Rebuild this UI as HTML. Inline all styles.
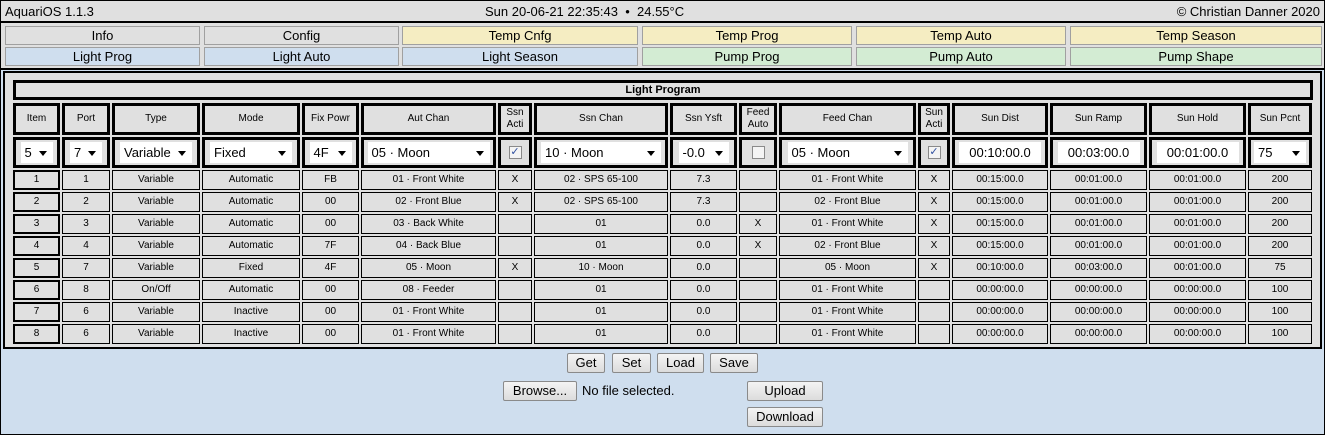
<!DOCTYPE html>
<html><head><meta charset="utf-8"><style>
*{box-sizing:border-box;margin:0;padding:0}
html,body{width:1325px;height:435px;overflow:hidden}
body{background:#cfdeee;font-family:"Liberation Sans",sans-serif;color:#000;position:relative}
.frame{position:absolute;left:0;top:0;width:1325px;height:435px;border:1px solid #000}
.hdr{position:absolute;left:0;top:0;width:1325px;height:23px;background:#e0e0e0;border:1px solid #000;border-bottom:2px solid #000;font-size:13px;line-height:21px}
.tabs{position:absolute;left:0;top:23px;width:1325px;height:47px;background:#e0e0e0;border-left:1px solid #000;border-right:1px solid #000;border-bottom:2px solid #000}
.tab{position:absolute;height:19px;border:1px solid #a0a0a0;font-size:13px;text-align:center;line-height:17px}
.g{background:#e0e0e0}.y{background:#f5edc2}.b{background:#cfdeee}.gr{background:#d3ecd3}
.panel{position:absolute;left:3px;top:71px;width:1319px;height:278px;border:2px solid #000;background:#e0e0e0;outline:1px solid #cfdeee}
.title{position:absolute;left:13px;top:80px;width:1300px;height:20px;border:3px solid #000;background:#e0e0e0;font-size:11px;font-weight:bold;text-align:center;line-height:14px}
table{position:absolute;left:11px;top:101px;border-collapse:separate;border-spacing:2px 2px;table-layout:fixed;width:1303px}
td{background:#e0e0e0;font-size:10px;text-align:center;padding:0;overflow:hidden;white-space:nowrap}
tr.h td{height:32px;border:3px solid #000;font-size:10px;line-height:12px;white-space:normal}
tr.i td{height:31px;border:3px solid #000}
tr.d td{height:20px;border:1px solid #000;line-height:18px}
tr.d td:first-child{border:2px solid #000;line-height:16px}
.sel{display:inline-block;background:#fff;height:21px;font-size:13px;line-height:21px;text-align:left;padding-left:4px;position:relative;vertical-align:middle}
.sel:after{content:"";position:absolute;right:6px;top:9px;border-left:4px solid transparent;border-right:4px solid transparent;border-top:5px solid #000}
.inp{display:inline-block;background:#fff;height:21px;font-size:13px;line-height:21px;vertical-align:middle}
.cb{display:inline-block;width:13px;height:13px;border:1px solid #8a8a8a;background:#f4f4f4;vertical-align:middle;font-size:11px;line-height:11px;color:#3050a0}
.btn{position:absolute;height:20px;border:1px solid #8a8a8a;border-radius:2px;background:linear-gradient(#f4f4f4,#dcdcdc);font-size:13px;text-align:center;line-height:18px}
</style></head><body>
<div class="hdr"><span style="position:absolute;left:4px">AquariOS 1.1.3</span><span style="position:absolute;left:484px">Sun 20-06-21 22:35:43 &nbsp;•&nbsp; 24.55°C</span><span style="position:absolute;right:4px">© Christian Danner 2020</span></div>
<div class="tabs">
<div class="tab g" style="left:4px;top:3px;width:195px">Info</div>
<div class="tab g" style="left:203px;top:3px;width:195px">Config</div>
<div class="tab y" style="left:401px;top:3px;width:236px">Temp Cnfg</div>
<div class="tab y" style="left:641px;top:3px;width:210px">Temp Prog</div>
<div class="tab y" style="left:855px;top:3px;width:210px">Temp Auto</div>
<div class="tab y" style="left:1069px;top:3px;width:252px">Temp Season</div>
<div class="tab b" style="left:4px;top:24px;width:195px">Light Prog</div>
<div class="tab b" style="left:203px;top:24px;width:195px">Light Auto</div>
<div class="tab b" style="left:401px;top:24px;width:236px">Light Season</div>
<div class="tab gr" style="left:641px;top:24px;width:210px">Pump Prog</div>
<div class="tab gr" style="left:855px;top:24px;width:210px">Pump Auto</div>
<div class="tab gr" style="left:1069px;top:24px;width:252px">Pump Shape</div>
</div>
<div class="panel"></div>
<div class="title">Light Program</div>
<table>
<colgroup><col style="width:47px"><col style="width:48px"><col style="width:88px"><col style="width:98px"><col style="width:57px"><col style="width:135px"><col style="width:34px"><col style="width:134px"><col style="width:67px"><col style="width:38px"><col style="width:137px"><col style="width:32px"><col style="width:96px"><col style="width:97px"><col style="width:97px"><col style="width:64px"></colgroup>
<tr class="h"><td>Item</td><td>Port</td><td>Type</td><td>Mode</td><td>Fix Powr</td><td>Aut Chan</td><td>Ssn<br>Acti</td><td>Ssn Chan</td><td>Ssn Ysft</td><td>Feed<br>Auto</td><td>Feed Chan</td><td>Sun<br>Acti</td><td>Sun Dist</td><td>Sun Ramp</td><td>Sun Hold</td><td>Sun Pcnt</td></tr>
<tr class="i"><td><span class="sel" style="width:32px">5</span></td><td><span class="sel" style="width:32px">7</span></td><td><span class="sel" style="width:72px">Variable</span></td><td><span class="sel" style="width:82px">Fixed</span></td><td><span class="sel" style="width:42px">4F</span></td><td><span class="sel" style="width:122px">05 · Moon</span></td><td><span class="cb">✓</span></td><td><span class="sel" style="width:120px">10 · Moon</span></td><td><span class="sel" style="width:50px">-0.0</span></td><td><span class="cb"></span></td><td><span class="sel" style="width:120px">05 · Moon</span></td><td><span class="cb">✓</span></td><td><span class="inp" style="width:82px">00:10:00.0</span></td><td><span class="inp" style="width:82px">00:03:00.0</span></td><td><span class="inp" style="width:82px">00:01:00.0</span></td><td><span class="sel" style="width:52px">75</span></td></tr>
<tr class="d"><td>1</td><td>1</td><td>Variable</td><td>Automatic</td><td>FB</td><td>01 · Front White</td><td>X</td><td>02 · SPS 65-100</td><td>7.3</td><td></td><td>01 · Front White</td><td>X</td><td>00:15:00.0</td><td>00:01:00.0</td><td>00:01:00.0</td><td>200</td></tr>
<tr class="d"><td>2</td><td>2</td><td>Variable</td><td>Automatic</td><td>00</td><td>02 · Front Blue</td><td>X</td><td>02 · SPS 65-100</td><td>7.3</td><td></td><td>02 · Front Blue</td><td>X</td><td>00:15:00.0</td><td>00:01:00.0</td><td>00:01:00.0</td><td>200</td></tr>
<tr class="d"><td>3</td><td>3</td><td>Variable</td><td>Automatic</td><td>00</td><td>03 · Back White</td><td></td><td>01</td><td>0.0</td><td>X</td><td>01 · Front White</td><td>X</td><td>00:15:00.0</td><td>00:01:00.0</td><td>00:01:00.0</td><td>200</td></tr>
<tr class="d"><td>4</td><td>4</td><td>Variable</td><td>Automatic</td><td>7F</td><td>04 · Back Blue</td><td></td><td>01</td><td>0.0</td><td>X</td><td>02 · Front Blue</td><td>X</td><td>00:15:00.0</td><td>00:01:00.0</td><td>00:01:00.0</td><td>200</td></tr>
<tr class="d"><td>5</td><td>7</td><td>Variable</td><td>Fixed</td><td>4F</td><td>05 · Moon</td><td>X</td><td>10 · Moon</td><td>0.0</td><td></td><td>05 · Moon</td><td>X</td><td>00:10:00.0</td><td>00:03:00.0</td><td>00:01:00.0</td><td>75</td></tr>
<tr class="d"><td>6</td><td>8</td><td>On/Off</td><td>Automatic</td><td>00</td><td>08 · Feeder</td><td></td><td>01</td><td>0.0</td><td></td><td>01 · Front White</td><td></td><td>00:00:00.0</td><td>00:00:00.0</td><td>00:00:00.0</td><td>100</td></tr>
<tr class="d"><td>7</td><td>6</td><td>Variable</td><td>Inactive</td><td>00</td><td>01 · Front White</td><td></td><td>01</td><td>0.0</td><td></td><td>01 · Front White</td><td></td><td>00:00:00.0</td><td>00:00:00.0</td><td>00:00:00.0</td><td>100</td></tr>
<tr class="d"><td>8</td><td>6</td><td>Variable</td><td>Inactive</td><td>00</td><td>01 · Front White</td><td></td><td>01</td><td>0.0</td><td></td><td>01 · Front White</td><td></td><td>00:00:00.0</td><td>00:00:00.0</td><td>00:00:00.0</td><td>100</td></tr>
</table>
<div class="btn" style="left:567px;top:353px;width:38px">Get</div>
<div class="btn" style="left:612px;top:353px;width:39px">Set</div>
<div class="btn" style="left:657px;top:353px;width:47px">Load</div>
<div class="btn" style="left:710px;top:353px;width:48px">Save</div>
<div class="btn" style="left:503px;top:381px;width:74px">Browse...</div>
<div style="position:absolute;left:582px;top:383px;font-size:13px">No file selected.</div>
<div class="btn" style="left:747px;top:381px;width:76px">Upload</div>
<div class="btn" style="left:747px;top:407px;width:76px">Download</div>
<div class="frame"></div>
</body></html>
